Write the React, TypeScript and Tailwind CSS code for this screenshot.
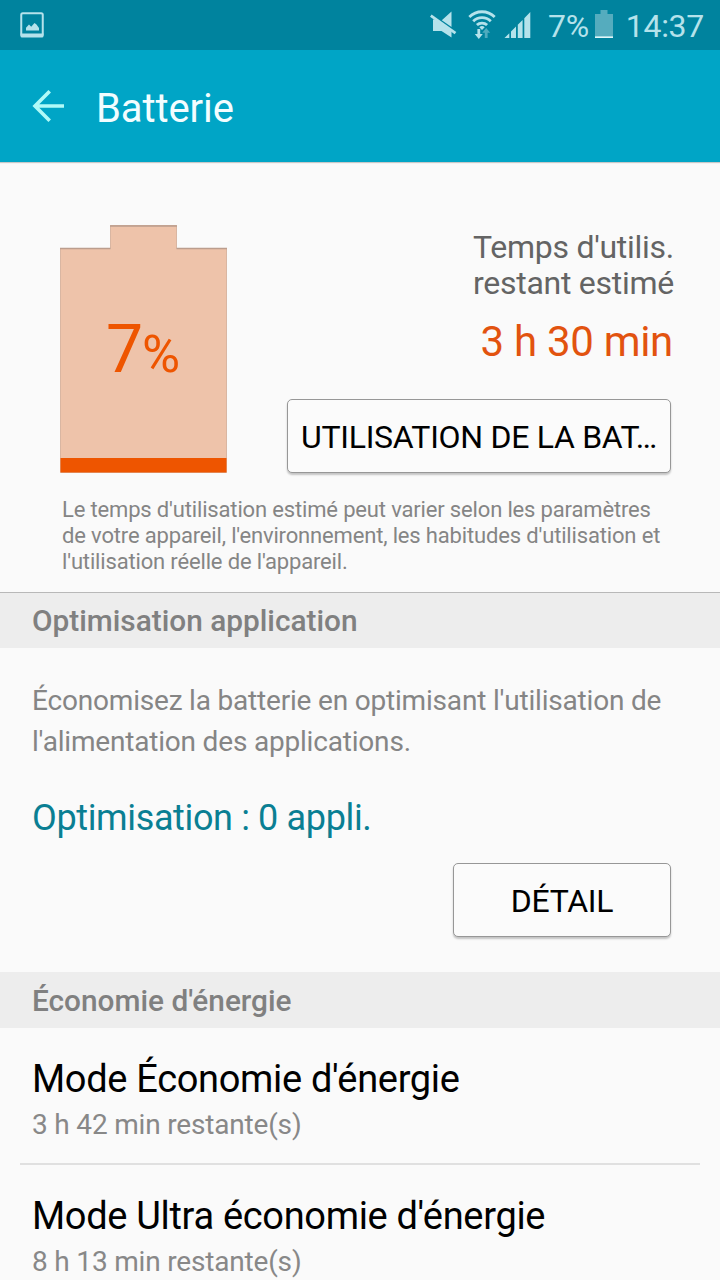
import React from 'react'

const modes = [
  { name: "Mode Économie d'énergie", remaining: '3 h 42 min restante(s)' },
  { name: "Mode Ultra économie d'énergie", remaining: '8 h 13 min restante(s)' }
]

const PictureIcon = () => (
  <svg className="w-6 h-[26px]" viewBox="0 0 24 26">
    <rect x="1.25" y="1.25" width="21.5" height="22.5" rx="1.5" fill="none" stroke="#b5e2eb" strokeWidth="2" />
    <path d="M0.5 21.5h23V24a1.5 1.5 0 0 1-1.5 1.5H2A1.5 1.5 0 0 1 .5 24z" fill="#b5e2eb" />
    <path d="M6 18.5v-2.7l3-3.3 2.2 2.2 3.3-3.7 2 1.5 2.5 3.6v2.4z" fill="#b5e2eb" />
  </svg>
)

const MuteIcon = () => (
  <svg className="w-[27px] h-7" viewBox="0 0 27 28">
    <path d="M21.5 0.5v15.5L11.8 9.2zM3 8.5h2.5L21.5 20v6.5L11.5 20H3z" fill="#b5e2eb" />
    <path d="M.8 4.6 25.5 22.2" stroke="#b5e2eb" strokeWidth="2.8" />
  </svg>
)

const WifiIcon = () => (
  <svg className="w-7 h-[30px]" viewBox="0 0 28 30" fill="none">
    <g stroke="#b5e2eb" strokeWidth="2.8">
      <path d="M1.3 6.9a18.2 18.2 0 0 1 25.4 0" />
      <path d="M5.2 11.2a12.7 12.7 0 0 1 17.6 0" />
      <path d="M8.9 15.1a7.4 7.4 0 0 1 10.2 0" />
    </g>
    <path d="M11.3 17.3a4 4 0 0 1 5.4 0L14 20z" fill="#b5e2eb" />
    <path d="M9.4 19h2.8v5h2.6l-4 5-4-5h2.6z" fill="#b5e2eb" />
    <path d="M18.2 18l4 4.8h-2.6V28h-2.8v-5.2h-2.6z" fill="#4fabbe" />
  </svg>
)

const SignalIcon = () => (
  <svg className="w-[27px] h-7" viewBox="0 0 27 28" fill="#b5e2eb">
    <path d="M.5 27 5.3 22.2V27zM7 27v-6.5l5-5V27zM13.8 27V13.7l4.8-4.8V27zM20.3 27V7.2L26.3 1v26z" />
  </svg>
)

const SmallBatteryIcon = () => (
  <svg className="w-[18px] h-7" viewBox="0 0 18 28">
    <path d="M0 4h5.5V0h7v4H18v22.5H0z" fill="#55acbe" />
    <path d="M0 26.3h18V28H0z" fill="#e0f7fa" />
  </svg>
)

const BackIcon = () => (
  <svg className="w-8 h-8" viewBox="0 0 32 32" fill="none" stroke="#b0faf8" strokeWidth="3.6">
    <path d="M32 16H3M17.7 1.3 3 16l14.7 14.7" />
  </svg>
)

const BatteryLevel = () => (
  <svg className="w-[167px] h-[248px]" viewBox="0 0 167 248">
    <path d="M.5 23.5h50V.5h66v23h50v224H.5z" fill="#eec3aa" stroke="#d9b6a2" />
    <path d="M0 23.5h50.5M50 1h67M116.5 23.5H167" stroke="#bb9d8d" strokeWidth="1.5" />
    <path d="M.5 233h166v14.5H.5z" fill="#ee5500" />
    <text x="46" y="147" fontSize="66" fill="#ee5500">7</text>
    <text x="82" y="147" fontSize="52" fill="#ee5500">%</text>
  </svg>
)

const SectionHeader = ({ title }: { title: string }) => (
  <h2 className="flex h-full items-center px-8 text-[29.8px] font-medium leading-9 text-[#808080]">
    {title}
  </h2>
)

const buttonClass =
  'flex h-[74px] items-center justify-center rounded-[5px] border border-[#979797] bg-[#fbfbfb] pt-0.5 text-[32px] tracking-[-0.29px] text-black shadow-[0_2px_2px_rgba(0,0,0,0.22)]'

export default function App() {
  return (
    <div className="flex h-[1280px] w-[720px] flex-col overflow-hidden whitespace-nowrap bg-[#fafafa] font-['Roboto',sans-serif]">
      {/* Status bar */}
      <div className="flex h-[50px] shrink-0 items-center justify-between bg-[#00839e] pl-5 pr-4 text-[32px] tracking-[-0.3px] text-[#b5e2eb]">
        <PictureIcon />
        <div className="flex items-center">
          <MuteIcon />
          <div className="ml-[11px] flex"><WifiIcon /></div>
          <div className="ml-2 flex"><SignalIcon /></div>
          <span className="ml-[17px] pt-0.5">7%</span>
          <div className="ml-1.5 flex pb-0.5"><SmallBatteryIcon /></div>
          <span className="ml-[13px] pt-0.5">14:37</span>
        </div>
      </div>

      {/* Title bar */}
      <header className="flex h-28 shrink-0 items-center gap-8 bg-[#00a5c6] px-8 shadow-[0_1px_1px_rgba(0,0,0,0.2)]">
        <BackIcon />
        <h1 className="pt-1.5 text-[40px] tracking-[-0.1px] text-[#f2fdff]">Batterie</h1>
      </header>

      {/* Remaining time */}
      <section className="h-[430px] shrink-0 pl-[60px] pt-[63px]">
        <div className="flex h-[248px] justify-between pr-[46px]">
          <BatteryLevel />
          <div className="flex flex-col items-end pt-1 text-right">
            <p className="text-[32px] leading-9 tracking-[-0.27px] text-[#646464]">
              Temps d'utilis.
              <br />
              restant estimé
            </p>
            <p className="mt-4 pr-px text-[42px] leading-[50px] tracking-[-0.3px] text-[#e2530f]">3 h 30 min</p>
            <button className={`${buttonClass} mr-[3px] mt-8 w-[384px]`}>UTILISATION DE LA BAT…</button>
          </div>
        </div>
        <p className="mt-6 pl-0.5 text-[22px] leading-[26px] tracking-[-0.16px] text-[#858585]">
          Le temps d'utilisation estimé peut varier selon les paramètres
          <br />
          de votre appareil, l'environnement, les habitudes d'utilisation et
          <br />
          l'utilisation réelle de l'appareil.
        </p>
      </section>

      {/* App optimisation */}
      <section className="h-[380px] shrink-0">
        <div className="h-14 border-t border-[#b8b8b8] bg-[#ededed] pt-px">
          <SectionHeader title="Optimisation application" />
        </div>
        <div className="flex flex-col px-8 pt-8">
          <p className="text-[28px] leading-[41px] tracking-[-0.19px] text-[#858585]">
            Économisez la batterie en optimisant l'utilisation de
            <br />
            l'alimentation des applications.
          </p>
          <p className="mt-[34px] text-4xl leading-[44px] tracking-[-0.36px] text-[#0a7f93]">Optimisation : 0 appli.</p>
          <button className={`${buttonClass} mr-[17px] mt-[23px] w-[218px] self-end`}>DÉTAIL</button>
        </div>
      </section>

      {/* Power saving modes */}
      <section className="shrink-0">
        <div className="h-14 bg-[#ededed] pt-0.5">
          <SectionHeader title="Économie d'énergie" />
        </div>
        <ul className="mx-5 divide-y-2 divide-[#e0e0e0]">
          {modes.map((mode) => (
            <li key={mode.name} className="h-[137px] px-3 pt-7">
              <p className="text-[38px] leading-[46px] tracking-[-0.32px] text-black">{mode.name}</p>
              <p className="mt-1.5 text-[28px] leading-[34px] tracking-[-0.18px] text-[#888]">{mode.remaining}</p>
            </li>
          ))}
        </ul>
      </section>
    </div>
  )
}
